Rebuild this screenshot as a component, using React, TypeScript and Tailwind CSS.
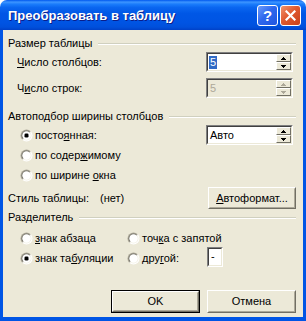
import React from "react";

function TitleBar() {
  return (
    <div className="h-[30px] shrink-0 flex items-center pl-[8px] pr-[5px] rounded-t-[7px] bg-[linear-gradient(180deg,#0058EE_0%,#3D95FF_7%,#1A7CFB_14%,#0A66F0_25%,#0057E6_45%,#0054E3_75%,#0050DC_90%,#0041C8_100%)]">
      <div className="flex-1 text-white font-bold text-[13px] leading-[16px] [text-shadow:1px_1px_0_#0A1E8A] pt-[1px]">
        Преобразовать в таблицу
      </div>
      <div className="flex gap-[2px]">
        <div className="w-[21px] h-[21px] rounded-[3px] border border-white flex items-center justify-center bg-[linear-gradient(135deg,#6D9CFB_0%,#2F68EE_45%,#1F55DF_100%)] text-white font-bold text-[15px] leading-[15px]">
          ?
        </div>
        <div className="w-[21px] h-[21px] rounded-[3px] border border-white flex items-center justify-center bg-[linear-gradient(135deg,#F0946E_0%,#E0592F_45%,#C8401A_100%)]">
          <svg width="11" height="11" viewBox="0 0 11 11">
            <path d="M1.5 1.5 L9.5 9.5 M9.5 1.5 L1.5 9.5" stroke="#fff" strokeWidth="2.2" strokeLinecap="square" />
          </svg>
        </div>
      </div>
    </div>
  );
}

function Group({ title }: { title: string }) {
  return (
    <div className="h-[13px] flex items-center">
      <span className="whitespace-nowrap">{title}</span>
      <div className="flex-1 ml-[6px] border-t border-t-[#D0D0BF] border-b border-b-white" />
    </div>
  );
}

function Tri({ up, color }: { up?: boolean; color: string }) {
  return (
    <svg width="5" height="3" viewBox="0 0 5 3" shapeRendering="crispEdges">
      <path d={up ? "M2 0h1v1h1v1h1v1h-5v-1h1v-1h1z" : "M0 0h5v1h-1v1h-1v1h-1v-1h-1v-1h-1z"} fill={color} />
    </svg>
  );
}

function SpinBtn({ up, disabled }: { up?: boolean; disabled?: boolean }) {
  return (
    <div className="flex-1 flex items-center justify-center bg-[#ECE9D8] border border-t-white border-l-white border-r-[#716F64] border-b-[#716F64]">
      <Tri up={up} color={disabled ? "#ACA899" : "#000"} />
    </div>
  );
}

function Field({
  children,
  width,
  spin,
  disabled,
}: {
  children: React.ReactNode;
  width: string;
  spin?: boolean;
  disabled?: boolean;
}) {
  return (
    <div className={`${width} h-[20px] border border-t-[#808080] border-l-[#808080] border-b-white border-r-white`}>
      <div
        className={`h-full flex border border-t-[#404040] border-l-[#404040] border-b-[#ECE9D8] border-r-[#ECE9D8] ${
          disabled ? "bg-[#ECE9D8] text-[#ACA899]" : "bg-white"
        }`}
      >
        <div className="flex-1 flex items-center pl-[1px]">{children}</div>
        {spin && (
          <div className="w-[15px] flex flex-col">
            <SpinBtn up disabled={disabled} />
            <SpinBtn disabled={disabled} />
          </div>
        )}
      </div>
    </div>
  );
}

function Radio({ checked }: { checked?: boolean }) {
  return (
    <svg width="13" height="13" viewBox="0 0 13 13" className="shrink-0">
      <defs>
        <linearGradient id="ro" x1="0" y1="0" x2="1" y2="1">
          <stop offset="0.45" stopColor="#ACA899" />
          <stop offset="0.55" stopColor="#FFFFFF" />
        </linearGradient>
        <linearGradient id="ri" x1="0" y1="0" x2="1" y2="1">
          <stop offset="0.45" stopColor="#716F64" />
          <stop offset="0.55" stopColor="#F1EFE2" />
        </linearGradient>
      </defs>
      <circle cx="6.5" cy="6.5" r="6" fill="url(#ro)" />
      <circle cx="6.5" cy="6.5" r="5" fill="url(#ri)" />
      <circle cx="6.5" cy="6.5" r="4.2" fill="#fff" />
      {checked && <rect x="4.5" y="4.5" width="4" height="4" rx="1.3" fill="#000" />}
    </svg>
  );
}

function Opt({ checked, children, className = "" }: { checked?: boolean; children: React.ReactNode; className?: string }) {
  return (
    <div className={`flex items-center gap-[2px] ${className}`}>
      <Radio checked={checked} />
      <span className="whitespace-nowrap">{children}</span>
    </div>
  );
}

function Button({ children, isDefault, className = "" }: { children: React.ReactNode; isDefault?: boolean; className?: string }) {
  const inner = (
    <div className="h-full border border-t-white border-l-white border-r-[#716F64] border-b-[#716F64]">
      <div className="h-full flex items-center justify-center border border-t-[#ECE9D8] border-l-[#ECE9D8] border-r-[#ACA899] border-b-[#ACA899]">
        {children}
      </div>
    </div>
  );
  return (
    <div className={`h-[23px] bg-[#ECE9D8] ${isDefault ? "border border-black" : ""} ${className}`}>{inner}</div>
  );
}

export default function App() {
  return (
    <div className="w-[306px] h-[321px] flex flex-col font-['Liberation_Sans',Arial,sans-serif] text-[11px] leading-[13px] text-black">
      <TitleBar />
      <div className="flex-1 flex flex-col bg-[#ECE9D8] border-x-[3px] border-b-[4px] border-[#0055E5] pl-[5px] pr-[7px] pt-[7px]">
        {/* Размер таблицы */}
        <Group title="Размер таблицы" />
        <div className="mt-[2px] h-[20px] flex items-center pl-[9px] pr-[3px]">
          <span className="flex-1">
            <u>Ч</u>исло столбцов:
          </span>
          <Field width="w-[87px]" spin>
            <span className="bg-[#316AC5] text-white px-[1px]">5</span>
          </Field>
        </div>
        <div className="mt-[6px] h-[20px] flex items-center pl-[9px] pr-[3px]">
          <span className="flex-1">
            Ч<u>и</u>сло строк:
          </span>
          <Field width="w-[87px]" spin disabled>
            <span className="px-[1px]">5</span>
          </Field>
        </div>

        {/* Автоподбор */}
        <div className="mt-[12px]">
          <Group title="Автоподбор ширины столбцов" />
        </div>
        <div className="mt-[2px] h-[20px] flex items-center pl-[12px] pr-[3px]">
          <Opt checked className="flex-1">
            посто<u>я</u>нная:
          </Opt>
          <Field width="w-[87px]" spin>
            <span className="px-[1px]">Авто</span>
          </Field>
        </div>
        <div className="h-[20px] flex items-center pl-[12px]">
          <Opt>
            по содер<u>ж</u>имому
          </Opt>
        </div>
        <div className="h-[20px] flex items-center pl-[12px]">
          <Opt>
            по ширине <u>о</u>кна
          </Opt>
        </div>

        {/* Стиль */}
        <div className="mt-[2px] h-[22px] flex items-center">
          <span className="w-[92px]">Стиль таблицы:</span>
          <span className="flex-1">(нет)</span>
          <Button className="w-[88px] !h-[22px]">
            <span>
              <u>А</u>втоформат...
            </span>
          </Button>
        </div>

        {/* Разделитель */}
        <div className="mt-[2px]">
          <Group title="Разделитель" />
        </div>
        <div className="mt-[4px] h-[20px] flex items-center pl-[12px]">
          <Opt className="w-[107px]">
            <u>з</u>нак абзаца
          </Opt>
          <Opt>
            точ<u>к</u>а с запятой
          </Opt>
        </div>
        <div className="h-[20px] flex items-center pl-[12px]">
          <Opt checked className="w-[107px]">
            знак та<u>б</u>уляции
          </Opt>
          <Opt className="w-[80px]">
            дру<u>г</u>ой:
          </Opt>
          <div className="-mt-[3px]">
            <Field width="w-[16px]">
              <span className="pl-[1px]">-</span>
            </Field>
          </div>
        </div>

        {/* Кнопки */}
        <div className="mt-[22px] flex justify-end gap-[7px]">
          <Button isDefault className="w-[89px]">
            OK
          </Button>
          <Button className="w-[89px]">Отмена</Button>
        </div>
      </div>
    </div>
  );
}
